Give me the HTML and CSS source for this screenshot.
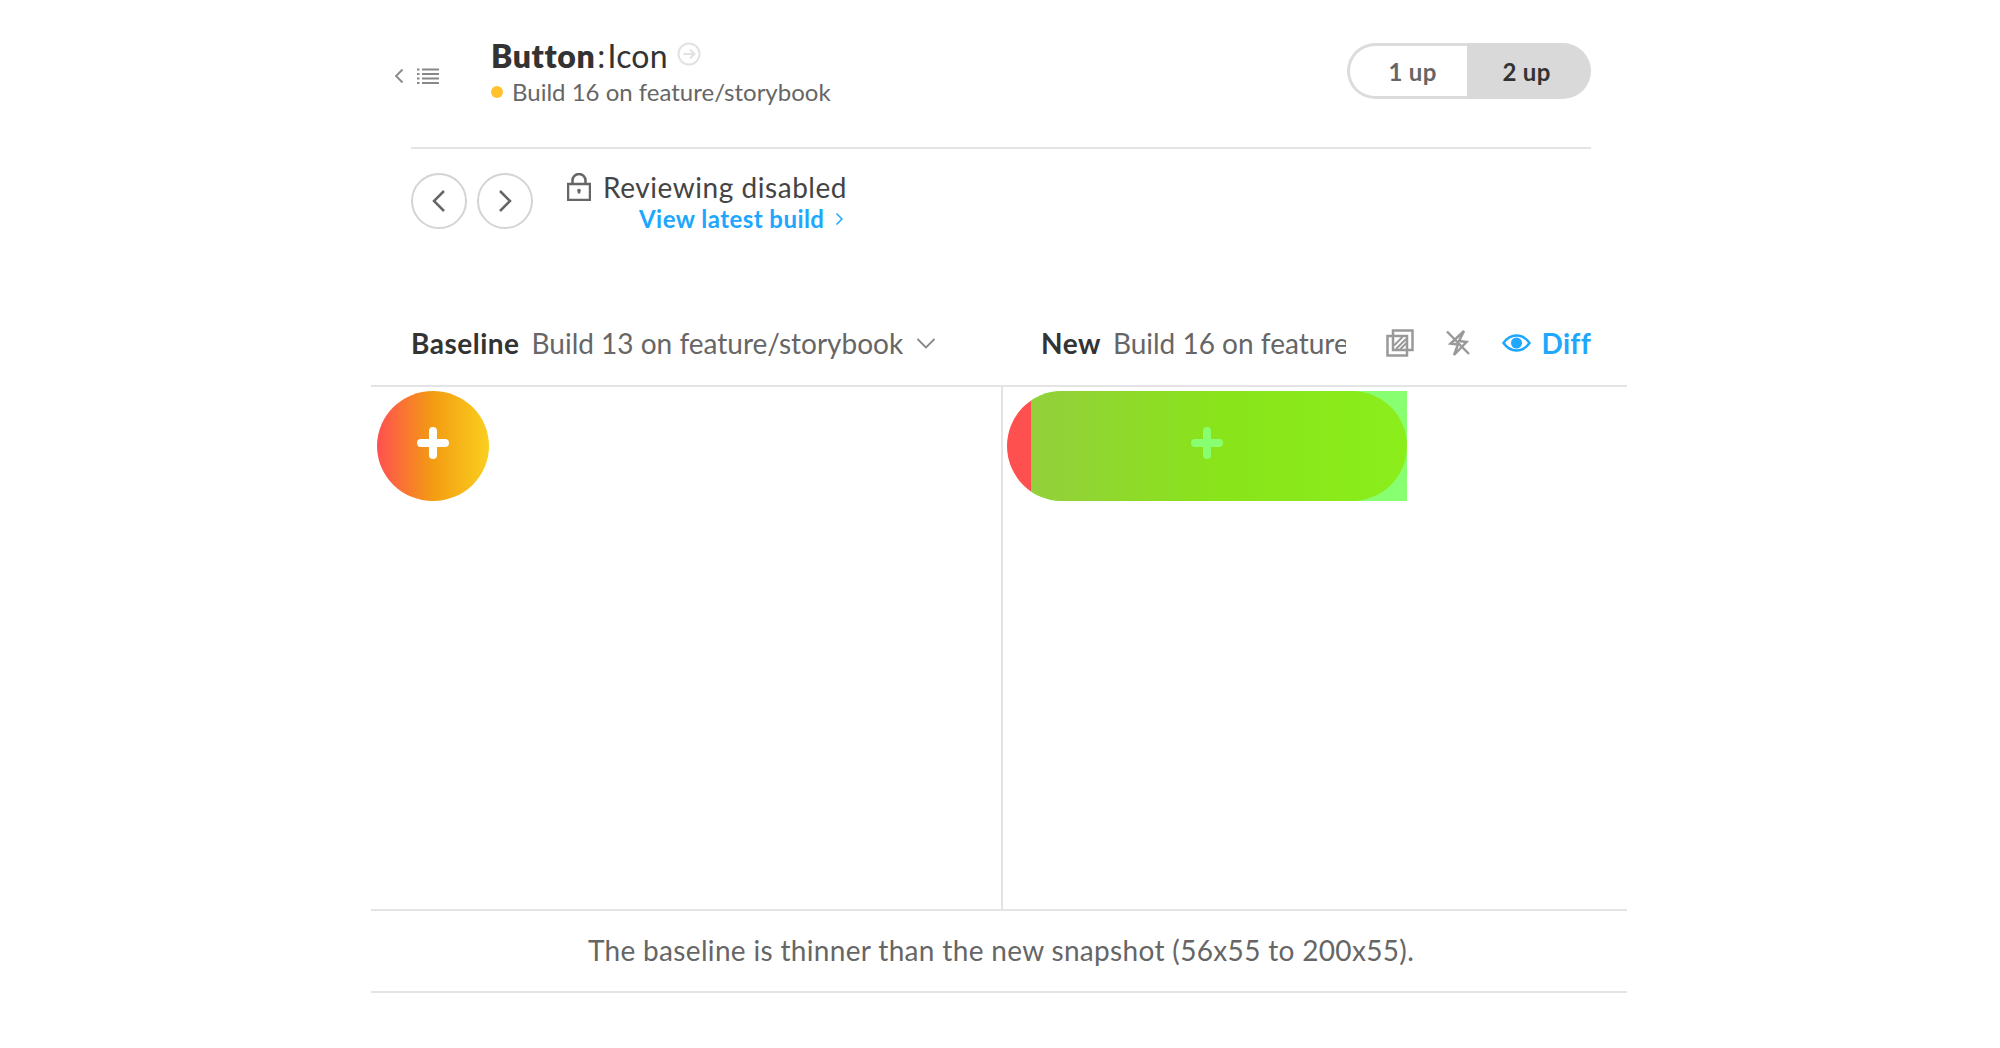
FILE: index.html
```html
<!DOCTYPE html>
<html lang="en">
<head>
    <meta charset="UTF-8">
    <title>Button:Icon</title>
    <link rel="stylesheet" href="styles.css">
</head>
<body>
    <div class="page">
        <header class="header">
            <div class="back">
                <svg class="back-chevron" width="10" height="16" viewBox="0 0 10 16"><path d="M8.500 1.500 2 8l6.500 6.500"/></svg>
                <svg class="back-list" width="22" height="16" viewBox="0 0 22 16"><path d="M0 1.500h2.500M0 6h2.500M0 10.500h2.500M0 15h2.500"/><path d="M5 1.500h17M5 6h17M5 10.500h17M5 15h17"/></svg>
            </div>
            <div class="heading">
                <h1 class="title"><b>Button</b><span class="colon">:</span>Icon
                    <svg class="title-link" width="24" height="24" viewBox="0 0 24 24"><circle cx="12" cy="12" r="10.500"/><path d="M6.500 12h10.500M13 7.500l4.500 4.500-4.500 4.500"/></svg>
                </h1>
                <div class="build"><span class="dot"></span>Build 16 on feature/storybook</div>
            </div>
            <div class="toggle">
                <button class="toggle-btn">1 up</button>
                <button class="toggle-btn active">2 up</button>
            </div>
        </header>

        <section class="review">
            <button class="round"><svg width="16" height="24" viewBox="0 0 16 24"><path d="M13 2 3 12l10 10"/></svg></button>
            <button class="round"><svg width="16" height="24" viewBox="0 0 16 24"><path d="M3 2l10 10L3 22"/></svg></button>
            <div class="review-info">
                <div class="review-status">
                    <svg class="lock" width="24" height="28" viewBox="0 0 24 28"><rect x="1" y="11" width="22" height="16"/><path d="M5.500 11V7.500a6.500 6.500 0 0 1 13 0V11"/><path d="M12 17.500v3"/><circle cx="12" cy="17.500" r="1.800"/></svg>
                    Reviewing disabled
                </div>
                <a class="latest" href="#">View latest build
                    <svg width="8" height="14" viewBox="0 0 8 14"><path d="M1.500 1.500 7 7l-5.500 5.500"/></svg>
                </a>
            </div>
        </section>

        <section class="compare-bar">
            <div class="compare-side">
                <strong>Baseline</strong>
                <span class="compare-build">Build 13 on feature/storybook</span>
                <svg class="caret" width="20" height="12" viewBox="0 0 20 12"><path d="M1.500 2 10 10.500 18.500 2"/></svg>
            </div>
            <div class="compare-side new">
                <strong>New</strong>
                <span class="compare-build clipped">Build 16 on feature/storybook</span>
                <div class="tools">
                    <svg class="tool" width="28" height="28" viewBox="0 0 28 28"><rect x="7" y="1.500" width="19.500" height="19.500"/><rect x="1.500" y="7" width="19.500" height="19.500"/><path class="hatch" d="M8 16.500 16.500 8M10 20l10-10M14 20.500l6.500-6.500"/></svg>
                    <svg class="tool" width="24" height="28" viewBox="1 0 24 28"><path d="M19 2 5.500 14.500l7.500 1L9 26l12.500-13-7.500-1z"/><path d="M2 2.500 24 25"/></svg>
                    <span class="diff">
                        <svg width="29" height="20" viewBox="0 0 29 20"><path d="M1.500 10C5 5 9.500 2.500 14.500 2.500S24 5 27.500 10C24 15 19.500 17.500 14.500 17.500S5 15 1.500 10z"/><circle cx="14.500" cy="10" r="5.500"/></svg>
                        Diff
                    </span>
                </div>
            </div>
        </section>

        <section class="panes">
            <div class="pane">
                <div class="snapshot baseline">
                    <svg class="plus" width="32" height="32" viewBox="0 0 32 32"><path d="M4 16h24M16 4v24"/></svg>
                </div>
            </div>
            <div class="pane">
                <div class="diff-image">
                    <div class="diff-fill">
                        <svg class="plus green" width="32" height="32" viewBox="0 0 32 32"><path d="M4 16h24M16 4v24"/></svg>
                    </div>
                </div>
            </div>
        </section>

        <p class="caption">The baseline is thinner than the new snapshot (56x55 to 200x55).</p>
    </div>
</body>
</html>
```

FILE: styles.css
```css
* {
    margin: 0;
    padding: 0;
    box-sizing: border-box;
}

body {
    background: #fff;
    color: #333;
    font-family: Lato, "Noto Sans", sans-serif;
}

svg {
    display: block;
    fill: none;
    stroke: currentColor;
}

button {
    font-family: inherit;
    background: none;
    cursor: pointer;
}

.page {
    width: 1256px;
    margin-left: 371px;
}

/* Header */
.header {
    display: flex;
    align-items: center;
    height: 149px;
    margin: 0 36px 0 40px;
    border-bottom: 2px solid #e4e4e4;
}

.back {
    display: flex;
    align-items: center;
    gap: 13px;
    width: 97px;
    margin-left: -17px;
    margin-top: 4px;
    color: #888;
}

.back svg {
    stroke-width: 1.800;
}

.heading {
    flex: 1;
    margin-top: -3px;
}

.title {
    display: flex;
    align-items: center;
    font-size: 32px;
    line-height: 40px;
    font-weight: 400;
    color: #333;
    letter-spacing: 0.2px;
}

.title b {
    font-weight: 800;
    letter-spacing: 0.6px;
}

.colon {
    margin: 0 2px;
}

.title-link {
    margin: -4px 0 0 9px;
    color: #e2e2e2;
    stroke-width: 2;
}

.build {
    display: flex;
    align-items: center;
    font-size: 24px;
    line-height: 32px;
    color: #666;
}

.dot {
    width: 12px;
    height: 12px;
    margin-right: 9px;
    border-radius: 50%;
    background: #ffc12d;
}

.toggle {
    display: flex;
    height: 56px;
    width: 244px;
    margin-top: -5px;
}

.toggle-btn {
    width: 120px;
    padding-left: 8px;
    border: 3px solid #dcdcdc;
    border-right: 0;
    border-radius: 28px 0 0 28px;
    font-size: 24px;
    font-weight: 700;
    letter-spacing: 0.3px;
    color: #666;
}

.toggle-btn.active {
    width: 124px;
    padding: 0 5px 0 0;
    border: 0;
    border-radius: 0 28px 28px 0;
    background: #d9d9d9;
    color: #333;
}

/* Review row */
.review {
    display: flex;
    height: 140px;
    padding: 24px 40px 0;
    gap: 10px;
}

.round {
    width: 56px;
    height: 56px;
    display: flex;
    align-items: center;
    justify-content: center;
    border: 2px solid #d4d4d4;
    border-radius: 50%;
    color: #666;
}

.round svg {
    stroke-width: 2.500;
}

.review-info {
    margin-left: 24px;
}

.review-status {
    display: flex;
    align-items: center;
    gap: 12px;
    height: 30px;
    margin-top: -1px;
    font-size: 28px;
    letter-spacing: 0.55px;
    color: #444;
}

.lock {
    stroke-width: 2.500;
    color: #666;
}

.lock circle {
    fill: currentColor;
    stroke: none;
}

.latest {
    display: flex;
    align-items: center;
    gap: 11px;
    margin: 2px 0 0 72px;
    font-size: 24px;
    line-height: 30px;
    font-weight: 700;
    letter-spacing: 0.45px;
    color: #1ea7fd;
    text-decoration: none;
}

.latest svg {
    stroke-width: 1.500;
}

/* Compare bar */
.compare-bar {
    display: flex;
    align-items: center;
    height: 98px;
    padding: 0 36px 0 40px;
    border-bottom: 2px solid #e4e4e4;
    font-size: 28px;
}

.compare-side {
    display: flex;
    align-items: center;
    width: 592px;
    padding-top: 12px;
}

.compare-side.new {
    flex: 1;
    width: auto;
    margin-left: 38px;
}

.compare-side strong {
    margin-right: 12px;
    color: #333;
    font-weight: 700;
    letter-spacing: 0.5px;
}

.compare-build {
    color: #666;
    white-space: nowrap;
}

.compare-build.clipped {
    width: 233px;
    overflow: hidden;
}

.caret {
    margin-left: 13px;
    color: #888;
    stroke-width: 1.800;
}

.tools {
    display: flex;
    align-items: center;
    margin-left: auto;
}

.tool {
    margin-right: 32px;
    color: #999;
    stroke-width: 2.500;
}

.tool .hatch {
    stroke-width: 2;
}

.diff {
    display: flex;
    align-items: center;
    gap: 11px;
    color: #1ea7fd;
    font-weight: 700;
    letter-spacing: 0.3px;
}

.diff svg {
    stroke-width: 2.500;
}

.diff circle {
    fill: currentColor;
    stroke: none;
}

/* Snapshot panes */
.panes {
    display: flex;
    height: 524px;
    border-bottom: 2px solid #e4e4e4;
}

.pane {
    padding: 4px 0 0 6px;
}

.pane:first-child {
    width: 632px;
    border-right: 2px solid #e4e4e4;
}

.pane:last-child {
    padding-left: 4px;
}

.plus {
    stroke: #fff;
    stroke-width: 8;
    stroke-linecap: round;
}

.plus.green {
    stroke: #88ff70;
}

.snapshot.baseline {
    display: flex;
    align-items: center;
    justify-content: center;
    width: 112px;
    height: 110px;
    padding-bottom: 6px;
    border-radius: 50%;
    background: linear-gradient(90deg, #ff5050, #f39c12 50%, #facf1f);
}

.diff-image {
    width: 400px;
    height: 110px;
    border-radius: 55px 0 0 55px;
    background: linear-gradient(90deg, #ff5050 24px, #88ff70 24px);
    overflow: hidden;
}

.diff-fill {
    display: flex;
    align-items: center;
    justify-content: center;
    height: 100%;
    margin-left: 24px;
    padding: 0 24px 6px 0;
    border-radius: 0 55px 55px 0;
    background: linear-gradient(90deg, #94cf3c, #89e41a 50%, #8bee1b);
}

.caption {
    height: 82px;
    padding-left: 4px;
    border-bottom: 2px solid #e4e4e4;
    font-size: 28px;
    letter-spacing: 0.33px;
    line-height: 78px;
    text-align: center;
    color: #666;
}
```
